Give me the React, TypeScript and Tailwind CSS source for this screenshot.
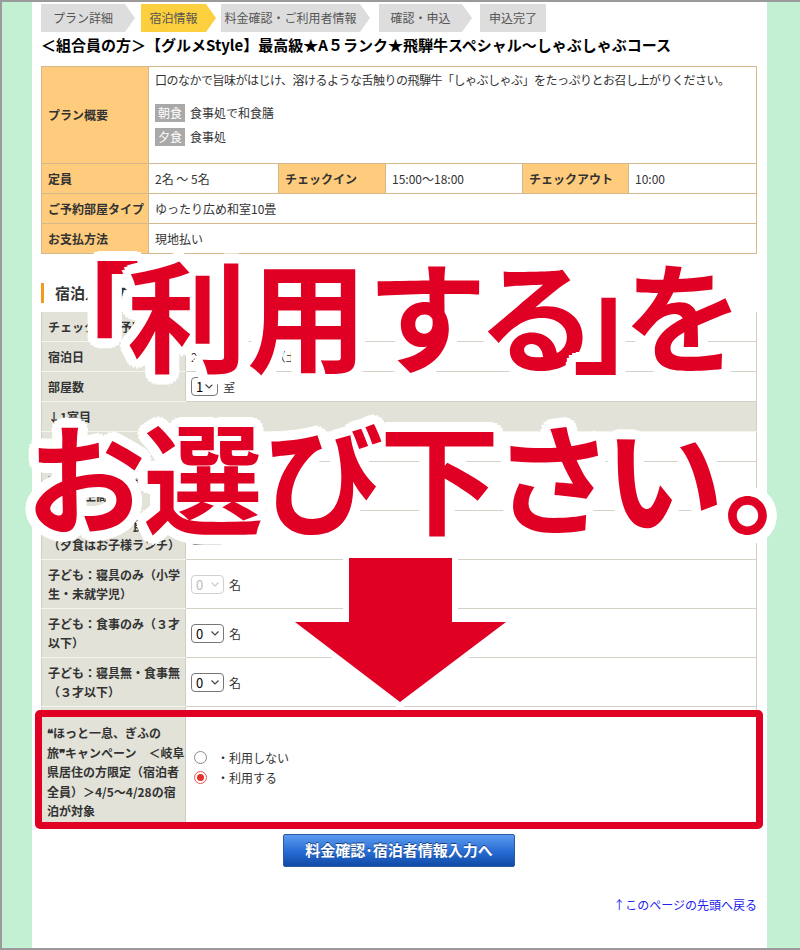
import React from "react";

const ring =
  "[text-shadow:10px_0_0_#fff,9.2px_3.8px_0_#fff,7.1px_7.1px_0_#fff,3.8px_9.2px_0_#fff,0_10px_0_#fff,-3.8px_9.2px_0_#fff,-7.1px_7.1px_0_#fff,-9.2px_3.8px_0_#fff,-10px_0_0_#fff,-9.2px_-3.8px_0_#fff,-7.1px_-7.1px_0_#fff,-3.8px_-9.2px_0_#fff,0_-10px_0_#fff,3.8px_-9.2px_0_#fff,7.1px_-7.1px_0_#fff,9.2px_-3.8px_0_#fff,5px_0_0_#fff,0_5px_0_#fff,-5px_0_0_#fff,0_-5px_0_#fff,3.5px_3.5px_0_#fff,-3.5px_3.5px_0_#fff,3.5px_-3.5px_0_#fff,-3.5px_-3.5px_0_#fff]";

const steps = [
  { label: "プラン詳細", cls: "w-[94px]", active: false },
  { label: "宿泊情報", cls: "w-[75px] ml-[6px]", active: true },
  { label: "料金確認・ご利用者情報", cls: "w-[149px] ml-[5px]", active: false },
  { label: "確認・申込", cls: "w-[93px] ml-[9px]", active: false },
  { label: "申込完了", cls: "w-[66px] ml-[8px]", active: false, last: true },
];

function Steps() {
  return (
    <div className="flex h-[28px]">
      {steps.map((s) => (
        <div
          key={s.label}
          className={`${s.cls} h-full flex items-center justify-center text-[12px] text-[#555] ${
            s.active ? "bg-[#fccf3e]" : "bg-[#dddddd]"
          } ${
            s.last
              ? ""
              : "pr-[10px] [clip-path:polygon(0_0,calc(100%_-_10px)_0,100%_50%,calc(100%_-_10px)_100%,0_100%)]"
          }`}
        >
          {s.label}
        </div>
      ))}
    </div>
  );
}

function Select({ value, disabled, narrow }: { value: string; disabled?: boolean; narrow?: boolean }) {
  return (
    <span
      className={`inline-flex items-center justify-between ${narrow ? "w-[27px]" : "w-[33px]"} h-[19px] rounded-[4px] border bg-white pl-[4px] pr-[4px] text-[13px] leading-none align-middle ${
        disabled ? "border-[#d0d0d0] text-[#bbb]" : "border-[#777] text-black"
      }`}
    >
      {value}
      <svg width="8" height="5" viewBox="0 0 8 5">
        <path d="M0.5 0.5 L4 4 L7.5 0.5" fill="none" stroke={disabled ? "#ccc" : "#444"} strokeWidth="1.2" />
      </svg>
    </span>
  );
}

function Count({ value, unit, disabled, narrow }: { value: string; unit: string; disabled?: boolean; narrow?: boolean }) {
  return (
    <div className="flex items-center gap-[5px]">
      <Select value={value} disabled={disabled} narrow={narrow} />
      <span>{unit}</span>
    </div>
  );
}

const lab =
  "bg-[#e2e2d8] font-bold text-left pl-[6px] pr-[3px] py-[5px] leading-[19px] border-b border-[#f4f3ee] border-r border-r-[#cfcdc4] align-middle";
const val = "px-[5px] py-[5px] leading-[19px] border-b border-[#d3d1c8] align-middle";

export default function App() {
  return (
    <div className="relative w-[800px] h-[950px] overflow-hidden font-['Noto_Sans_CJK_JP','Noto_Sans',sans-serif]">
      <div className="h-full bg-[#c3f0d2] border-t-2 border-l-2 border-b-2 border-[#9a9a9a]">
        <div className="ml-[30px] w-[735px] h-full bg-white pl-[9px] pr-[10px] pt-[2px]">
          <Steps />
          <h1 className="mt-[3px] text-[15px] leading-[20px] font-bold text-black whitespace-nowrap">
            ＜組合員の方＞【グルメStyle】最高級★A５ランク★飛騨牛スペシャル〜しゃぶしゃぶコース
          </h1>

          <table className="mt-[11px] w-[716px] table-fixed border-collapse border border-[#d6b88d] text-[12px] text-[#333]">
            <colgroup>
              <col className="w-[107px]" />
              <col className="w-[130px]" />
              <col className="w-[107px]" />
              <col className="w-[137px]" />
              <col className="w-[106px]" />
              <col />
            </colgroup>
            <tbody>
              <tr>
                <th className="h-[97px] bg-[#fecc7c] border border-[#d6b88d] text-left font-bold pl-[6px]">プラン概要</th>
                <td colSpan={5} className="border border-[#d6b88d] align-top px-[6px] pt-[4px] leading-[18px]">
                  <p className="whitespace-nowrap tracking-[-0.5px]">
                    口のなかで旨味がはじけ、溶けるような舌触りの飛騨牛「しゃぶしゃぶ」をたっぷりとお召し上がりください。
                  </p>
                  <div className="mt-[15px] flex items-center gap-[5px]">
                    <span className="bg-[#a9a9a9] text-white px-[3px] leading-[18px]">朝食</span>
                    <span>食事処で和食膳</span>
                  </div>
                  <div className="mt-[6px] flex items-center gap-[5px]">
                    <span className="bg-[#a9a9a9] text-white px-[3px] leading-[18px]">夕食</span>
                    <span>食事処</span>
                  </div>
                </td>
              </tr>
              <tr>
                <th className="h-[30px] bg-[#fecc7c] border border-[#d6b88d] text-left font-bold pl-[6px]">定員</th>
                <td className="border border-[#d6b88d] px-[6px]">2名 ～ 5名</td>
                <th className="bg-[#fecc7c] border border-[#d6b88d] text-left font-bold pl-[6px]">チェックイン</th>
                <td className="border border-[#d6b88d] px-[6px]">15:00〜18:00</td>
                <th className="bg-[#fecc7c] border border-[#d6b88d] text-left font-bold pl-[6px]">チェックアウト</th>
                <td className="border border-[#d6b88d] px-[6px]">10:00</td>
              </tr>
              <tr>
                <th className="h-[30px] bg-[#fecc7c] border border-[#d6b88d] text-left font-bold pl-[6px] whitespace-nowrap">ご予約部屋タイプ</th>
                <td colSpan={5} className="border border-[#d6b88d] px-[6px]">ゆったり広め和室10畳</td>
              </tr>
              <tr>
                <th className="h-[30px] bg-[#fecc7c] border border-[#d6b88d] text-left font-bold pl-[6px]">お支払方法</th>
                <td colSpan={5} className="border border-[#d6b88d] px-[6px]">現地払い</td>
              </tr>
            </tbody>
          </table>

          <h2 className="mt-[29px] h-[20px] flex items-center border-l-[3px] border-[#f39a1e] pl-[11px] text-[15px] font-bold text-[#333]">
            宿泊人数の選択
          </h2>

          <table className="mt-[9px] w-[716px] table-fixed border-collapse border-x border-[#cfcdc4] text-[12px] text-[#333]">
            <colgroup>
              <col className="w-[144px]" />
              <col />
            </colgroup>
            <tbody>
              <tr>
                <th className={lab}>チェックイン予定時刻</th>
                <td className={val}></td>
              </tr>
              <tr>
                <th className={lab}>宿泊日</th>
                <td className={val}>2024年4月27日（土） から 1泊</td>
              </tr>
              <tr>
                <th className={lab}>部屋数</th>
                <td className={val}>
                  <Count value="1" unit="室" narrow />
                </td>
              </tr>
              <tr>
                <th colSpan={2} className={lab}>↓1室目</th>
              </tr>
              <tr>
                <th className={lab}>大人</th>
                <td className={val}>
                  <Count value="2" unit="名" />
                </td>
              </tr>
              <tr>
                <th className={lab}>子ども：大人に準ずる（小学生高学年）</th>
                <td className={val}>
                  <Count value="0" unit="名" />
                </td>
              </tr>
              <tr>
                <th className={lab}>子ども：寝具・食事あり（夕食はお子様ランチ）</th>
                <td className={val}>
                  <Count value="0" unit="名" />
                </td>
              </tr>
              <tr>
                <th className={lab}>子ども：寝具のみ（小学生・未就学児）</th>
                <td className={val}>
                  <Count value="0" unit="名" disabled />
                </td>
              </tr>
              <tr>
                <th className={lab}>子ども：食事のみ（３才以下）</th>
                <td className={val}>
                  <Count value="0" unit="名" />
                </td>
              </tr>
              <tr>
                <th className={lab}>子ども：寝具無・食事無（３才以下）</th>
                <td className={val}>
                  <Count value="0" unit="名" />
                </td>
              </tr>
              <tr>
                <th className="bg-[#e2e2d8] font-bold text-left pl-[5px] pr-0 pt-[16px] pb-[8px] leading-[19.5px] border-r border-[#cfcdc4] align-top">
                  ❝ほっと一息、ぎふの旅❞キャンペーン　＜岐阜県居住の方限定（宿泊者全員）＞4/5〜4/28の宿泊が対象
                </th>
                <td className="px-[8px] align-middle">
                  <label className="flex items-center gap-[10px] leading-[20px]">
                    <span className="w-[13px] h-[13px] rounded-full border border-[#8a8a8a] bg-white" />
                    <span>・利用しない</span>
                  </label>
                  <label className="flex items-center gap-[10px] leading-[20px]">
                    <span className="w-[13px] h-[13px] rounded-full border border-[#de5a55] bg-white flex items-center justify-center">
                      <span className="w-[7px] h-[7px] rounded-full bg-[#e5332a]" />
                    </span>
                    <span>・利用する</span>
                  </label>
                </td>
              </tr>
            </tbody>
          </table>

          <div className="mt-[5px] flex justify-center">
            <button className="w-[232px] h-[33px] rounded-[2px] border border-[#2a58a3] bg-gradient-to-b from-[#5c9bef] via-[#2a6fd6] to-[#0f4aa6] text-white text-[15px] font-bold [text-shadow:0_-1px_0_#1a3f80]">
              料金確認･宿泊者情報入力へ
            </button>
          </div>

          <div className="mt-[30px] text-right text-[12px] leading-[16px] text-[#2222ee]">
            <a href="#top">↑このページの先頭へ戻る</a>
          </div>
        </div>
      </div>

      {/* annotation: red frame round the campaign row */}
      <div className="absolute left-[35px] top-[710px] w-[728px] h-[119px] rounded-[5px] border-[7px] border-[#e00024]" />

      {/* annotation: arrow */}
      <svg className="absolute left-0 top-0" width="800" height="950" viewBox="0 0 800 950">
        <polygon
          points="349,558 452,558 452,622 506,622 400,702 295,622 349,622"
          fill="#e00024"
          stroke="#fff"
          strokeWidth="12"
          strokeLinejoin="miter"
          paintOrder="stroke"
        />
      </svg>

      {/* annotation: headline */}
      <div
        className={`absolute left-[79px] top-[252px] whitespace-nowrap text-[120px] leading-none font-bold text-[#e00024] [font-feature-settings:'palt'] ${ring}`}
      >
        「<span className="ml-[-12px]">利用</span>
        <span className="ml-[6px]">する</span>
        <span className="ml-[-17px]">」</span>
        <span className="ml-[-10px]">を</span>
      </div>
      <div
        className={`absolute left-[27px] top-[414px] whitespace-nowrap text-[120px] leading-none font-bold text-[#e00024] [font-feature-settings:'palt'] ${ring}`}
      >
        お選び下さい。
      </div>
    </div>
  );
}
